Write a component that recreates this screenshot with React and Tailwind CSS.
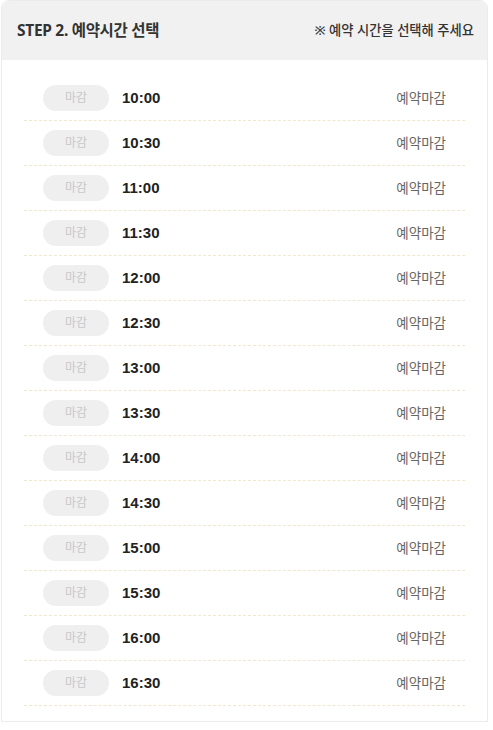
import React from "react";

const times = ["10:00","10:30","11:00","11:30","12:00","12:30","13:00","13:30","14:00","14:30","15:00","15:30","16:00","16:30"];

export default function App() {
  return (
    <div className="w-[493px] bg-white pl-px pr-[5px] pt-0" style={{ fontFamily: '"Noto Sans", "Noto Sans CJK KR", sans-serif' }}>
      <div className="w-[487px] rounded-t-[8px] border border-[#ebebeb] bg-white">
        <div className="flex h-[59px] items-center justify-between rounded-t-[8px] bg-[#f1f1f1] pl-[15px] pr-[13px]">
          <div className="text-[15.5px] font-bold text-[#333] tracking-[-0.3px]">STEP 2. 예약시간 선택</div>
          <div className="text-[13.3px] font-medium text-[#333]">※ 예약 시간을 선택해 주세요</div>
        </div>
        <div className="px-[22px] pt-[16px] pb-[15px]">
          {times.map((t) => (
            <div key={t} className="flex h-[45px] items-center border-b border-dashed border-[#efe8cf] pl-[19px] pr-[19px]">
              <div className="flex h-[26px] w-[66px] items-center justify-center rounded-[13px] bg-[#efefef] text-[12px] text-[#c8c8c8]">마감</div>
              <div className="ml-[13px] text-[15px] font-bold text-[#222]" style={{ fontFamily: '"Liberation Sans", Arial, sans-serif' }}>{t}</div>
              <div className="ml-auto text-[13.5px] text-[#666]">예약마감</div>
            </div>
          ))}
        </div>
      </div>
    </div>
  );
}
